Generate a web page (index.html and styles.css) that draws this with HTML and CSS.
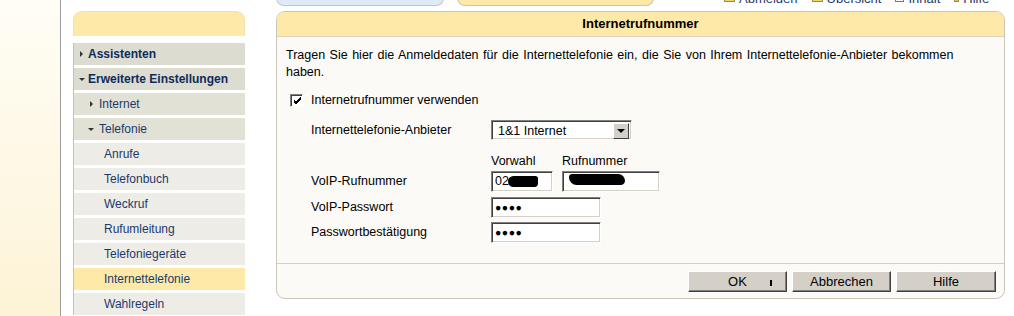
FILE: index.html
```html
<!DOCTYPE html>
<html lang="de">
<head>
  <meta charset="UTF-8" />
  <title>Internetrufnummer</title>
  <link rel="stylesheet" href="styles.css">
</head>
<body>
  <div class="shell">
    <div class="gutter"></div>
    <div class="page">
      <div class="topbar">
        <div class="tab tab-blue">Übersicht</div>
        <div class="tab tab-yellow">Erweiterte Einstellungen</div>
        <div class="links">
          <span class="link"><i class="ico"></i>Abmelden</span>
          <span class="link"><i class="ico"></i>Übersicht</span>
          <span class="link"><i class="ico ico-small"></i>Inhalt</span>
          <span class="link"><i class="ico ico-tiny"></i>Hilfe</span>
        </div>
      </div>

      <div class="columns">
        <nav class="nav">
          <div class="nav-head"></div>
          <ul class="menu">
            <li class="item top closed">Assistenten</li>
            <li class="item top open">Erweiterte Einstellungen</li>
            <li class="item sub closed">Internet</li>
            <li class="item sub open">Telefonie</li>
            <li class="item leaf">Anrufe</li>
            <li class="item leaf">Telefonbuch</li>
            <li class="item leaf">Weckruf</li>
            <li class="item leaf">Rufumleitung</li>
            <li class="item leaf">Telefoniegeräte</li>
            <li class="item leaf active">Internettelefonie</li>
            <li class="item leaf">Wahlregeln</li>
          </ul>
        </nav>

        <main class="panel">
          <div class="panel-head">Internetrufnummer</div>
          <div class="panel-body">
            <p class="intro">Tragen Sie hier die Anmeldedaten für die Internettelefonie ein, die Sie von Ihrem Internettelefonie-Anbieter bekommen haben.</p>

            <div class="row row-check">
              <span class="checkbox">
                <svg width="9" height="9" viewBox="0 0 9 9"><path d="M1 4 L3 6 L8 1 M1 5 L3 7 L8 2 M1 6 L3 8 L8 3" fill="none" stroke="#000" stroke-width="1"/></svg>
              </span>
              <span>Internetrufnummer verwenden</span>
            </div>

            <div class="row row-select">
              <span class="label">Internettelefonie-Anbieter</span>
              <span class="select">
                <span class="select-text">1&amp;1 Internet</span>
                <span class="select-btn"><i class="arrow-down"></i></span>
              </span>
            </div>

            <div class="row row-heads">
              <span class="label"></span>
              <span class="head-vorwahl">Vorwahl</span>
              <span>Rufnummer</span>
            </div>

            <div class="row row-field">
              <span class="label">VoIP-Rufnummer</span>
              <span class="field field-vorwahl">02<i class="blot blot-a"></i></span>
              <span class="field field-nummer"><i class="blot blot-b"></i></span>
            </div>

            <div class="row row-field row-pass">
              <span class="label">VoIP-Passwort</span>
              <span class="field field-pass">●●●●</span>
            </div>

            <div class="row row-field row-confirm">
              <span class="label">Passwortbestätigung</span>
              <span class="field field-pass">●●●●</span>
            </div>
          </div>
          <div class="panel-foot">
            <button class="btn">OK<i class="cursor"></i></button>
            <button class="btn">Abbrechen</button>
            <button class="btn btn-wide">Hilfe</button>
          </div>
        </main>
      </div>
    </div>
  </div>
</body>
</html>
```

FILE: styles.css
```css
html, body {
  margin: 0;
  height: 100%;
  overflow: hidden;
}
body {
  font-family: "Liberation Sans", Arial, sans-serif;
  font-size: 12.5px;
  color: #000;
  background: #fff;
}
.shell {
  display: flex;
  height: 100%;
}
.gutter {
  width: 60px;
  flex: none;
  background: linear-gradient(#fffdf6, #fdf3d6);
  border-right: 1px solid #9d9d9d;
}
.page {
  flex: 1;
  padding-left: 12px;
}

/* top strip, mostly scrolled out of view */
.topbar {
  display: flex;
  align-items: flex-end;
  height: 20px;
  margin-top: -14px;
  padding-left: 203px;
}
.tab {
  height: 20px;
  box-sizing: border-box;
  border: 1px solid #c9c5b8;
  border-top: none;
  border-radius: 0 0 8px 8px;
  font-weight: bold;
  font-size: 12px;
  text-align: center;
  line-height: 9px;
  color: #000;
  overflow: hidden;
}
.tab-blue {
  width: 168px;
  background: #dfeaf8;
}
.tab-yellow {
  width: 197px;
  margin-left: 13px;
  background: #fee9a8;
}
.links {
  display: flex;
  margin-left: 70px;
  gap: 14px;
  font-size: 13px;
  line-height: 13px;
  color: #1b3a6b;
  padding-bottom: 1px;
}
.link {
  display: flex;
  align-items: flex-end;
  gap: 4px;
}
.ico {
  display: inline-block;
  width: 11px;
  height: 9px;
  margin-bottom: 3px;
  background: #f2d36b;
  border: 1px solid #9a8a4a;
  box-sizing: border-box;
}
.ico-small {
  width: 9px;
  background: #fff;
  border-color: #777;
}
.ico-tiny {
  width: 5px;
  height: 6px;
  background: #e9c24a;
}

.columns {
  display: flex;
  align-items: flex-start;
  margin-top: 5px;
}

/* navigation */
.nav {
  width: 172px;
  flex: none;
  background: #fff;
}
.nav-head {
  height: 25px;
  box-sizing: border-box;
  background: #fee9a8;
  border: 1px solid #efe0b0;
  border-bottom: none;
  border-radius: 9px 9px 0 0;
}
.menu {
  list-style: none;
  margin: 7px 0 0;
  padding: 0;
  border-left: 1px solid #c4c1b6;
}
.item {
  position: relative;
  height: 22px;
  line-height: 22px;
  margin-bottom: 3px;
  font-size: 12px;
  color: #1b3a6b;
  background: #edece6;
  white-space: nowrap;
}
.item.top {
  background: #dddcd0;
  font-weight: bold;
  color: #0d2b5c;
  padding-left: 14px;
}
.item.sub {
  background: #e2e1d6;
  padding-left: 25px;
}
.item.leaf {
  padding-left: 30px;
}
.item.active {
  background: #fee9a8;
}
.item.closed::before,
.item.open::before {
  content: "";
  position: absolute;
  top: 8px;
  width: 0;
  height: 0;
}
.item.closed::before {
  border-left: 3px solid #333;
  border-top: 3px solid transparent;
  border-bottom: 3px solid transparent;
}
.item.open::before {
  top: 10px;
  border-top: 3px solid #333;
  border-left: 3px solid transparent;
  border-right: 3px solid transparent;
}
.item.top::before { left: 6px; }
.item.top.open::before { left: 5px; }
.item.sub::before { left: 16px; }
.item.sub.open::before { left: 14px; }

/* main panel */
.panel {
  width: 729px;
  margin-left: 31px;
  box-sizing: border-box;
  border: 1px solid #c9c5b8;
  border-radius: 9px;
  background: #fbfaf6;
  overflow: hidden;
}
.panel-head {
  height: 24px;
  line-height: 24px;
  background: #fee9a8;
  border-bottom: 1px solid #d9d3bf;
  text-align: center;
  font-weight: bold;
  font-size: 13px;
}
.panel-body {
  padding: 10px 9px 21px;
}
.intro {
  margin: 0;
  line-height: 17px;
  word-spacing: 1px;
}
.row {
  display: flex;
  align-items: center;
  height: 20px;
}
.row-check {
  margin-top: 9px;
  padding-left: 4px;
}
.checkbox {
  width: 13px;
  height: 13px;
  box-sizing: border-box;
  border-top: 1px solid #808080;
  border-left: 1px solid #808080;
  border-right: 1px solid #fff;
  border-bottom: 1px solid #fff;
  box-shadow: inset 1px 1px 0 #404040;
  background: #fff;
  margin-right: 8px;
  display: flex;
  align-items: center;
  justify-content: center;
  padding: 1px 0 0 1px;
}
.row-select { margin-top: 10px; }
.label {
  width: 205px;
  flex: none;
  padding-left: 25px;
  box-sizing: border-box;
}
.select {
  width: 141px;
  height: 20px;
  box-sizing: border-box;
  display: flex;
  border-top: 1px solid #808080;
  border-left: 1px solid #808080;
  border-right: 1px solid #fff;
  border-bottom: 1px solid #fff;
  box-shadow: inset 1px 1px 0 #404040, inset -1px -1px 0 #d4d0c8;
  background: #fff;
  padding: 2px;
}
.select-text {
  flex: 1;
  line-height: 16px;
  padding-left: 4px;
}
.select-btn {
  width: 16px;
  height: 16px;
  box-sizing: border-box;
  background: #d4d0c8;
  border-top: 1px solid #fff;
  border-left: 1px solid #fff;
  border-right: 1px solid #404040;
  border-bottom: 1px solid #404040;
  display: flex;
  align-items: center;
  justify-content: center;
}
.arrow-down {
  border-top: 4px solid #000;
  border-left: 4px solid transparent;
  border-right: 4px solid transparent;
}
.row-heads {
  margin-top: 13px;
  height: 16px;
}
.head-vorwahl { width: 71px; }
.row-field { margin-top: 2px; }
.row-pass { margin-top: 6px; }
.row-confirm { margin-top: 5px; }
.field {
  position: relative;
  height: 21px;
  box-sizing: border-box;
  border-top: 1px solid #808080;
  border-left: 1px solid #808080;
  border-right: 1px solid #fff;
  border-bottom: 1px solid #fff;
  box-shadow: inset 1px 1px 0 #404040, inset -1px -1px 0 #d4d0c8;
  background: #fff;
  line-height: 19px;
  padding-left: 3px;
  overflow: hidden;
}
.field-vorwahl { width: 62px; margin-right: 9px; }
.field-nummer { width: 98px; }
.field-pass {
  width: 110px;
  font-size: 10.5px;
  letter-spacing: 0.5px;
}
.blot {
  position: absolute;
  background: #000;
}
.blot-a {
  left: 16px;
  top: 4px;
  width: 30px;
  height: 11px;
  border-radius: 6px 3px 4px 6px;
}
.blot-b {
  left: 6px;
  top: 2px;
  width: 56px;
  height: 11px;
  border-radius: 4px 8px 5px 9px;
}

.panel-foot {
  display: flex;
  justify-content: flex-end;
  gap: 5px;
  border-top: 1px solid #d3cfc3;
  padding: 7px 8px 6px;
}
.btn {
  position: relative;
  width: 99px;
  height: 21px;
  font-family: "Liberation Sans", Arial, sans-serif;
  font-size: 13px;
  color: #000;
  background: #d4d0c8;
  border-top: 1px solid #fff;
  border-left: 1px solid #fff;
  border-right: 1px solid #404040;
  border-bottom: 1px solid #404040;
  box-shadow: inset -1px -1px 0 #808080;
  padding: 0;
}
.btn-wide { width: 100px; }
.cursor {
  position: absolute;
  left: 81px;
  top: 8px;
  width: 2px;
  height: 6px;
  background: #000;
}
```
